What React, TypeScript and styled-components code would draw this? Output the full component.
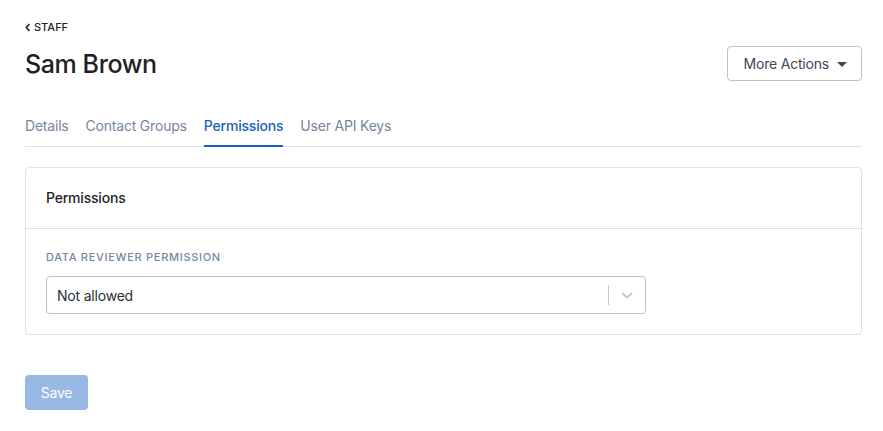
import React from 'react';
import styled, { createGlobalStyle } from 'styled-components';

const GlobalStyle = createGlobalStyle`
  body {
    margin: 0;
    background: #fff;
    font-family: Inter, Roboto, "Liberation Sans", sans-serif;
    color: #1f2329;
    letter-spacing: -0.2px;
  }
  * { box-sizing: border-box; }
`;

const tabs = ['Details', 'Contact Groups', 'Permissions', 'User API Keys'];

const App: React.FC = () => {
  return (
    <Page>
      <GlobalStyle />
      <BackLink>
        <svg width="6" height="9" viewBox="0 0 6 9">
          <path d="M4.5 1 L1.3 4.5 L4.5 8" fill="none" stroke="#1f2329" strokeWidth="1.6" />
        </svg>
        STAFF
      </BackLink>
      <HeaderRow>
        <Title>Sam Brown</Title>
        <ActionsButton>
          More Actions
          <Caret />
        </ActionsButton>
      </HeaderRow>
      <TabBar>
        {tabs.map((t) => (
          <Tab key={t} active={t === 'Permissions'}>{t}</Tab>
        ))}
      </TabBar>
      <Card>
        <CardHeader>Permissions</CardHeader>
        <CardBody>
          <FieldLabel>Data Reviewer Permission</FieldLabel>
          <Select>
            <SelectValue>Not allowed</SelectValue>
            <Separator />
            <svg width="14" height="9" viewBox="0 0 14 9">
              <path d="M2 2 L7 6.5 L12 2" fill="none" stroke="#c5c8cc" strokeWidth="2" />
            </svg>
          </Select>
        </CardBody>
      </Card>
      <SaveButton disabled>Save</SaveButton>
    </Page>
  );
};

export default App;

const Page = styled.div`
  padding: 19px 21px 20px 25px;
`;

const BackLink = styled.a`
  display: flex;
  align-items: center;
  gap: 3px;
  font-size: 11px;
  line-height: 16px;
  font-weight: 500;
  letter-spacing: 0;
  color: #1f2329;
`;

const HeaderRow = styled.div`
  display: flex;
  align-items: center;
  justify-content: space-between;
  margin-top: 11px;
`;

const Title = styled.h1`
  margin: 0;
  font-size: 25px;
  line-height: 36px;
  font-weight: 500;
  letter-spacing: -0.4px;
  color: #1f2125;
`;

const ActionsButton = styled.button`
  display: flex;
  align-items: center;
  gap: 8px;
  height: 35px;
  margin-top: -2px;
  padding: 0 14px 0 16px;
  background: #fff;
  border: 1px solid #b5c3d5;
  border-radius: 4px;
  font-family: inherit;
  font-size: 14px;
  letter-spacing: -0.2px;
  color: #3d4757;
`;

const Caret = styled.span`
  width: 0;
  height: 0;
  border-left: 5px solid transparent;
  border-right: 5px solid transparent;
  border-top: 5px solid #3d4757;
  margin-top: 2px;
`;

const TabBar = styled.div`
  display: flex;
  gap: 17px;
  margin-top: 34px;
  border-bottom: 1px solid #dce3ec;
`;

const Tab = styled.div<{ active?: boolean }>`
  font-size: 14px;
  line-height: 20px;
  padding: 0 0 9px;
  margin-bottom: -1px;
  font-weight: ${({ active }) => (active ? 500 : 400)};
  color: ${({ active }) => (active ? '#1a5fbf' : '#7585a0')};
  border-bottom: 2px solid ${({ active }) => (active ? '#1a5fbf' : 'transparent')};
`;

const Card = styled.div`
  margin-top: 20px;
  border: 1px solid #dde2ea;
  border-radius: 4px;
`;

const CardHeader = styled.div`
  padding: 20px;
  font-size: 14px;
  line-height: 20px;
  font-weight: 500;
  color: #1f2329;
  border-bottom: 1px solid #dde2ea;
`;

const CardBody = styled.div`
  padding: 20px 20px 20px;
`;

const FieldLabel = styled.div`
  font-size: 11px;
  line-height: 16px;
  font-weight: 500;
  text-transform: uppercase;
  letter-spacing: 0.7px;
  color: #7487a0;
  margin-bottom: 11px;
`;

const Select = styled.div`
  display: flex;
  align-items: center;
  width: 600px;
  height: 38px;
  padding: 0 11px 0 10px;
  border: 1px solid #b5c3d5;
  border-radius: 4px;
`;

const SelectValue = styled.span`
  flex: 1;
  font-size: 14px;
  color: #2a2e35;
`;

const Separator = styled.span`
  width: 1px;
  height: 20px;
  background: #c5c8cc;
  margin-right: 11px;
`;

const SaveButton = styled.button`
  margin-top: 40px;
  height: 35px;
  width: 63px;
  border: none;
  border-radius: 4px;
  background: #99b9e5;
  color: #fff;
  font-family: inherit;
  font-size: 14px;
  letter-spacing: -0.2px;
`;
